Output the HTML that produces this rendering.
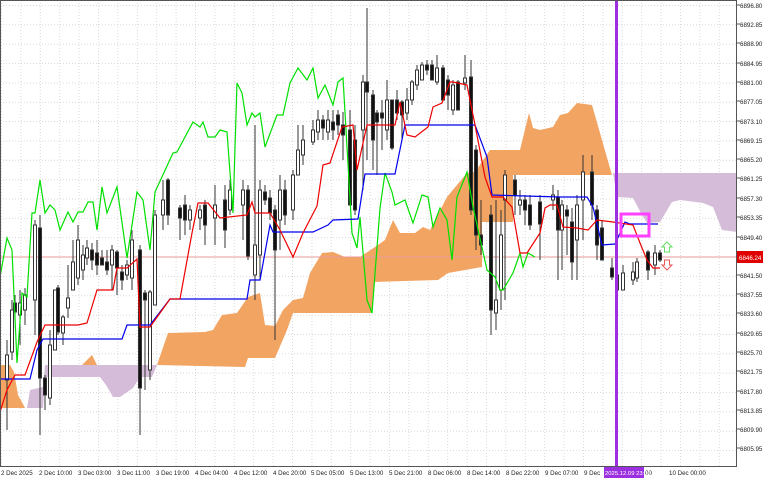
<!DOCTYPE html>
<html><head><meta charset="utf-8"><style>
html,body{margin:0;padding:0;background:#fff;width:768px;height:480px;overflow:hidden}
svg{display:block}
text{font-family:"Liberation Sans",sans-serif;font-size:6.2px;fill:#222}
</style></head><body>
<svg width="768" height="480" viewBox="0 0 768 480" xmlns="http://www.w3.org/2000/svg">
<defs>
<pattern id="gv" width="19.4" height="480" patternUnits="userSpaceOnUse" x="1"><line x1="0.5" y1="0" x2="0.5" y2="480" stroke="#d8d8d8" stroke-width="1" stroke-dasharray="1,2"/></pattern>
<pattern id="gh" width="768" height="19.35" patternUnits="userSpaceOnUse" y="5"><line x1="0" y1="0.5" x2="768" y2="0.5" stroke="#d8d8d8" stroke-width="1" stroke-dasharray="1,2"/></pattern>
</defs>
<rect x="1" y="1" width="735" height="465" fill="url(#gv)"/>
<rect x="1" y="1" width="735" height="465" fill="url(#gh)"/>
<!-- clouds -->
<polygon fill="#f2a462" points="0,365 10,365 14,372 18,395 24,406 25,408 0,408"/>
<polygon fill="#d5bcd8" points="27,408 30,390 43,387 45,365 157,365 152,377 140,377 133,388 120,397 113,397 106,385 100,377 45,377 43,408"/>
<polygon fill="#f2a462" points="82,365 92,355 97,365"/>
<polygon fill="#f2a462" points="157,365 168,333 205,332 213,330 222,315 237,313 248,297 260,293 265,325 275,326 283,310 293,300 303,298 310,273 322,253 333,252 345,257 360,257 375,247 385,240 393,220 400,233 415,233 423,227 430,230 447,197 467,173 475,172 490,150 520,150 529,113 533,128 540,130 553,127 560,115 568,113 577,103 592,105 612,175 513,175 513,222 482,222 482,267 448,273 438,280 375,282 372,313 293,313 287,330 275,358 248,358 245,367"/>
<polygon fill="#d5bcd8" points="613,173 737,173 737,232 722,230 713,207 703,203 680,200 672,202 660,222 647,223 642,215 633,198 617,197"/>
<!-- current price line -->
<line x1="0" y1="257" x2="736" y2="257" stroke="#e89a9a" stroke-width="1"/>
<!-- candles -->
<g stroke="#333" stroke-width="1" shape-rendering="crispEdges">
<g fill="#fff">
<line x1="7" y1="340" x2="7" y2="430"/><rect x="5.5" y="355" width="3" height="25"/>
<line x1="12" y1="300" x2="12" y2="360"/><rect x="10.5" y="310" width="3" height="42"/>
<line x1="20" y1="290" x2="20" y2="345"/><rect x="18.5" y="303" width="3" height="12"/>
<line x1="25" y1="288" x2="25" y2="325"/><rect x="23.5" y="295" width="3" height="15"/>
<line x1="35" y1="220" x2="35" y2="335"/><rect x="33.5" y="225" width="3" height="75"/>
<line x1="50" y1="330" x2="50" y2="405"/><rect x="48.5" y="345" width="3" height="53"/>
<line x1="55" y1="290" x2="55" y2="350"/><rect x="53.5" y="290" width="3" height="60"/>
<line x1="63" y1="315" x2="63" y2="345"/><rect x="61.5" y="317" width="3" height="16"/>
<line x1="68" y1="265" x2="68" y2="318"/><rect x="66.5" y="298" width="3" height="10"/>
<line x1="73" y1="240" x2="73" y2="290"/><rect x="71.5" y="262" width="3" height="28"/>
<line x1="78" y1="225" x2="78" y2="285"/><rect x="76.5" y="240" width="3" height="38"/>
<line x1="83" y1="245" x2="83" y2="280"/><rect x="81.5" y="255" width="3" height="15"/>
<line x1="87" y1="240" x2="87" y2="265"/><rect x="85.5" y="248" width="3" height="10"/>
<line x1="112" y1="245" x2="112" y2="290"/><rect x="110.5" y="250" width="3" height="15"/>
<line x1="127" y1="260" x2="127" y2="280"/><rect x="125.5" y="265" width="3" height="10"/>
<line x1="132" y1="230" x2="132" y2="290"/><rect x="130.5" y="240" width="3" height="38"/>
<line x1="150" y1="290" x2="150" y2="380"/><rect x="148.5" y="292" width="3" height="78"/>
<line x1="155" y1="210" x2="155" y2="305"/><rect x="153.5" y="215" width="3" height="90"/>
<line x1="163" y1="180" x2="163" y2="230"/><rect x="161.5" y="200" width="3" height="15"/>
<line x1="190" y1="205" x2="190" y2="230"/><rect x="188.5" y="210" width="3" height="10"/>
<line x1="200" y1="205" x2="200" y2="230"/><rect x="198.5" y="210" width="3" height="8"/>
<line x1="215" y1="185" x2="215" y2="245"/><rect x="213.5" y="205" width="3" height="13"/>
<line x1="230" y1="180" x2="230" y2="215"/><rect x="228.5" y="190" width="3" height="20"/>
<line x1="243" y1="180" x2="243" y2="240"/><rect x="241.5" y="190" width="3" height="15"/>
<line x1="255" y1="125" x2="255" y2="300"/><rect x="253.5" y="245" width="3" height="30"/>
<line x1="260" y1="180" x2="260" y2="280"/><rect x="258.5" y="190" width="3" height="65"/>
<line x1="280" y1="175" x2="280" y2="250"/><rect x="278.5" y="190" width="3" height="30"/>
<line x1="293" y1="170" x2="293" y2="220"/><rect x="291.5" y="175" width="3" height="35"/>
<line x1="298" y1="125" x2="298" y2="175"/><rect x="296.5" y="150" width="3" height="25"/>
<line x1="303" y1="125" x2="303" y2="165"/><rect x="301.5" y="140" width="3" height="15"/>
<line x1="313" y1="120" x2="313" y2="145"/><rect x="311.5" y="130" width="3" height="12"/>
<line x1="318" y1="110" x2="318" y2="140"/><rect x="316.5" y="120" width="3" height="12"/>
<line x1="328" y1="110" x2="328" y2="140"/><rect x="326.5" y="120" width="3" height="12"/>
<line x1="363" y1="75" x2="363" y2="190"/><rect x="361.5" y="82" width="3" height="48"/>
<line x1="387" y1="80" x2="387" y2="140"/><rect x="385.5" y="100" width="3" height="30"/>
<line x1="407" y1="88" x2="407" y2="120"/><rect x="405.5" y="100" width="3" height="13"/>
<line x1="412" y1="80" x2="412" y2="105"/><rect x="410.5" y="82" width="3" height="18"/>
<line x1="417" y1="65" x2="417" y2="90"/><rect x="415.5" y="70" width="3" height="15"/>
<line x1="422" y1="62" x2="422" y2="80"/><rect x="420.5" y="65" width="3" height="15"/>
<line x1="437" y1="55" x2="437" y2="85"/><rect x="435.5" y="68" width="3" height="14"/>
<line x1="453" y1="80" x2="453" y2="115"/><rect x="451.5" y="85" width="3" height="25"/>
<line x1="465" y1="55" x2="465" y2="90"/><rect x="463.5" y="78" width="3" height="5"/>
<line x1="496" y1="200" x2="496" y2="330"/><rect x="494.5" y="300" width="3" height="13"/>
<line x1="501" y1="210" x2="501" y2="310"/><rect x="499.5" y="235" width="3" height="55"/>
<line x1="505" y1="170" x2="505" y2="300"/><rect x="503.5" y="175" width="3" height="25"/>
<line x1="520" y1="190" x2="520" y2="215"/><rect x="518.5" y="200" width="3" height="5"/>
<line x1="553" y1="185" x2="553" y2="210"/><rect x="551.5" y="195" width="3" height="5"/>
<line x1="562" y1="200" x2="562" y2="270"/><rect x="560.5" y="205" width="3" height="25"/>
<line x1="577" y1="195" x2="577" y2="280"/><rect x="575.5" y="205" width="3" height="35"/>
<line x1="583" y1="155" x2="583" y2="240"/><rect x="581.5" y="172" width="3" height="28"/>
<line x1="623" y1="265" x2="623" y2="288"/><rect x="621.5" y="273" width="3" height="17"/>
<line x1="633" y1="262" x2="633" y2="285"/><rect x="631.5" y="272" width="3" height="8"/>
<line x1="637" y1="258" x2="637" y2="282"/><rect x="635.5" y="262" width="3" height="16"/>
<line x1="655" y1="245" x2="655" y2="275"/><rect x="653.5" y="253" width="3" height="12"/>
</g>
<g fill="#111">
<line x1="15" y1="295" x2="15" y2="320"/><rect x="13.5" y="303" width="3" height="9"/>
<line x1="40" y1="215" x2="40" y2="435"/><rect x="38.5" y="228" width="3" height="150"/>
<line x1="45" y1="375" x2="45" y2="410"/><rect x="43.5" y="378" width="3" height="17"/>
<line x1="58" y1="285" x2="58" y2="335"/><rect x="56.5" y="288" width="3" height="44"/>
<line x1="92" y1="243" x2="92" y2="270"/><rect x="90.5" y="250" width="3" height="10"/>
<line x1="97" y1="240" x2="97" y2="275"/><rect x="95.5" y="253" width="3" height="12"/>
<line x1="102" y1="250" x2="102" y2="265"/><rect x="100.5" y="258" width="3" height="7"/>
<line x1="107" y1="250" x2="107" y2="275"/><rect x="105.5" y="262" width="3" height="8"/>
<line x1="117" y1="250" x2="117" y2="295"/><rect x="115.5" y="252" width="3" height="16"/>
<line x1="122" y1="265" x2="122" y2="290"/><rect x="120.5" y="272" width="3" height="8"/>
<line x1="140" y1="245" x2="140" y2="435"/><rect x="138.5" y="250" width="3" height="138"/>
<line x1="145" y1="290" x2="145" y2="390"/><rect x="143.5" y="293" width="3" height="7"/>
<line x1="168" y1="178" x2="168" y2="225"/><rect x="166.5" y="180" width="3" height="35"/>
<line x1="180" y1="205" x2="180" y2="240"/><rect x="178.5" y="208" width="3" height="10"/>
<line x1="185" y1="195" x2="185" y2="235"/><rect x="183.5" y="205" width="3" height="15"/>
<line x1="205" y1="200" x2="205" y2="245"/><rect x="203.5" y="205" width="3" height="20"/>
<line x1="225" y1="185" x2="225" y2="248"/><rect x="223.5" y="200" width="3" height="30"/>
<line x1="248" y1="185" x2="248" y2="260"/><rect x="246.5" y="190" width="3" height="66"/>
<line x1="265" y1="185" x2="265" y2="205"/><rect x="263.5" y="192" width="3" height="8"/>
<line x1="270" y1="190" x2="270" y2="220"/><rect x="268.5" y="198" width="3" height="15"/>
<line x1="275" y1="205" x2="275" y2="340"/><rect x="273.5" y="210" width="3" height="40"/>
<line x1="285" y1="180" x2="285" y2="225"/><rect x="283.5" y="190" width="3" height="25"/>
<line x1="323" y1="115" x2="323" y2="140"/><rect x="321.5" y="120" width="3" height="8"/>
<line x1="333" y1="110" x2="333" y2="140"/><rect x="331.5" y="122" width="3" height="8"/>
<line x1="338" y1="110" x2="338" y2="135"/><rect x="336.5" y="115" width="3" height="10"/>
<line x1="343" y1="112" x2="343" y2="160"/><rect x="341.5" y="125" width="3" height="10"/>
<line x1="350" y1="110" x2="350" y2="205"/><rect x="348.5" y="130" width="3" height="75"/>
<line x1="355" y1="125" x2="355" y2="215"/><rect x="353.5" y="140" width="3" height="70"/>
<line x1="367" y1="8" x2="367" y2="160"/><rect x="365.5" y="82" width="3" height="10"/>
<line x1="373" y1="90" x2="373" y2="170"/><rect x="371.5" y="95" width="3" height="45"/>
<line x1="377" y1="110" x2="377" y2="175"/><rect x="375.5" y="113" width="3" height="9"/>
<line x1="382" y1="100" x2="382" y2="150"/><rect x="380.5" y="113" width="3" height="5"/>
<line x1="392" y1="100" x2="392" y2="150"/><rect x="390.5" y="100" width="3" height="48"/>
<line x1="397" y1="90" x2="397" y2="120"/><rect x="395.5" y="100" width="3" height="13"/>
<line x1="402" y1="100" x2="402" y2="140"/><rect x="400.5" y="102" width="3" height="13"/>
<line x1="427" y1="60" x2="427" y2="75"/><rect x="425.5" y="65" width="3" height="5"/>
<line x1="432" y1="60" x2="432" y2="80"/><rect x="430.5" y="65" width="3" height="15"/>
<line x1="443" y1="65" x2="443" y2="100"/><rect x="441.5" y="68" width="3" height="32"/>
<line x1="448" y1="75" x2="448" y2="110"/><rect x="446.5" y="80" width="3" height="15"/>
<line x1="458" y1="80" x2="458" y2="110"/><rect x="456.5" y="82" width="3" height="28"/>
<line x1="471" y1="60" x2="471" y2="215"/><rect x="469.5" y="77" width="3" height="133"/>
<line x1="476" y1="145" x2="476" y2="250"/><rect x="474.5" y="150" width="3" height="85"/>
<line x1="481" y1="200" x2="481" y2="255"/><rect x="479.5" y="235" width="3" height="10"/>
<line x1="491" y1="205" x2="491" y2="335"/><rect x="489.5" y="215" width="3" height="95"/>
<line x1="515" y1="175" x2="515" y2="215"/><rect x="513.5" y="180" width="3" height="15"/>
<line x1="525" y1="195" x2="525" y2="225"/><rect x="523.5" y="200" width="3" height="10"/>
<line x1="530" y1="195" x2="530" y2="230"/><rect x="528.5" y="205" width="3" height="20"/>
<line x1="540" y1="195" x2="540" y2="260"/><rect x="538.5" y="202" width="3" height="22"/>
<line x1="558" y1="190" x2="558" y2="280"/><rect x="556.5" y="197" width="3" height="33"/>
<line x1="567" y1="205" x2="567" y2="255"/><rect x="565.5" y="210" width="3" height="6"/>
<line x1="572" y1="208" x2="572" y2="280"/><rect x="570.5" y="222" width="3" height="40"/>
<line x1="592" y1="155" x2="592" y2="220"/><rect x="590.5" y="172" width="3" height="33"/>
<line x1="597" y1="205" x2="597" y2="260"/><rect x="595.5" y="210" width="3" height="35"/>
<line x1="602" y1="220" x2="602" y2="260"/><rect x="600.5" y="228" width="3" height="32"/>
<line x1="612" y1="258" x2="612" y2="280"/><rect x="610.5" y="268" width="3" height="9"/>
<line x1="617" y1="255" x2="617" y2="290"/><rect x="615.5" y="275" width="3" height="15"/>
<line x1="648" y1="250" x2="648" y2="280"/><rect x="646.5" y="252" width="3" height="18"/>
<line x1="660" y1="250" x2="660" y2="262"/><rect x="658.5" y="253" width="3" height="7"/>
</g>
</g>
<!-- ichimoku lines -->
<polyline fill="none" stroke="#00e000" stroke-width="1.2" points="0,277 7,238 12,250 17,363 22,293 27,297 32,213 35,213 40,180 45,213 50,205 55,210 60,230 68,212 73,222 78,212 83,212 88,202 93,202 97,230 102,187 107,213 117,187 127,258 137,192 143,200 150,250 155,192 173,153 177,152 193,122 200,127 203,122 208,137 215,137 220,130 227,132 233,213 237,83 242,93 247,125 252,113 255,117 260,113 265,147 277,115 283,115 290,83 298,68 307,80 313,68 318,98 325,85 333,105 338,82 343,78 352,233 357,248 360,217 367,300 372,313 380,208 385,173 392,192 395,205 405,200 413,223 422,195 428,197 433,227 440,208 447,220 452,260 457,197 467,172 473,207 487,270 495,277 500,290 503,290 513,273 520,253 523,267 528,253 535,257"/>
<polyline fill="none" stroke="#0000ee" stroke-width="1.2" points="0,379 30,379 37,350 43,339 122,339 127,325 150,325 170,299 247,299 250,280 260,280 270,225 273,232 313,232 328,225 333,220 358,219 365,174 395,174 405,125 475,125 487,157 492,195 560,197 587,197 593,207 602,245 615,244 625,222 630,224 658,224"/>
<polyline fill="none" stroke="#ee0000" stroke-width="1.2" points="0,412 7,390 15,375 25,375 37,342 45,325 78,325 87,323 97,290 113,290 117,268 127,268 137,259 140,327 150,327 170,299 180,299 192,233 198,203 208,203 220,218 247,215 252,202 255,213 270,213 280,230 293,257 303,233 317,206 323,165 330,163 342,127 353,125 357,170 367,125 395,125 400,102 407,135 415,137 428,127 433,107 442,103 450,82 453,82 467,85 475,125 485,177 492,197 503,197 512,207 520,253 527,253 540,233 545,208 550,205 557,205 563,227 577,228 588,230 597,220 613,222 633,225 640,243 647,260 653,268 660,268"/>
<!-- vertical line -->
<rect x="615" y="0" width="3" height="466" fill="#9b30e0"/>
<!-- magenta box -->
<rect x="621" y="214" width="28" height="22" fill="none" stroke="#ff40ff" stroke-width="3"/>
<!-- arrows -->
<path d="M667,242 L672,247 L669.5,247 L669.5,252 L664.5,252 L664.5,247 L662,247 Z" fill="#fff" stroke="#66dd66" stroke-width="1"/>
<path d="M667,270 L672,265 L669.5,265 L669.5,260 L664.5,260 L664.5,265 L662,265 Z" fill="#fff" stroke="#ee5555" stroke-width="1"/>
<!-- frame -->
<rect x="0.5" y="0.5" width="736" height="466" fill="none" stroke="#555" stroke-width="1"/>
<!-- price axis -->
<g stroke="#555" stroke-width="1">
<line x1="737" y1="5" x2="740" y2="5"/><line x1="737" y1="24" x2="740" y2="24"/><line x1="737" y1="43" x2="740" y2="43"/><line x1="737" y1="63" x2="740" y2="63"/><line x1="737" y1="82" x2="740" y2="82"/><line x1="737" y1="101" x2="740" y2="101"/><line x1="737" y1="121" x2="740" y2="121"/><line x1="737" y1="140" x2="740" y2="140"/><line x1="737" y1="159" x2="740" y2="159"/><line x1="737" y1="178" x2="740" y2="178"/><line x1="737" y1="198" x2="740" y2="198"/><line x1="737" y1="217" x2="740" y2="217"/><line x1="737" y1="237" x2="740" y2="237"/><line x1="737" y1="275" x2="740" y2="275"/><line x1="737" y1="294" x2="740" y2="294"/><line x1="737" y1="313" x2="740" y2="313"/><line x1="737" y1="333" x2="740" y2="333"/><line x1="737" y1="352" x2="740" y2="352"/><line x1="737" y1="371" x2="740" y2="371"/><line x1="737" y1="391" x2="740" y2="391"/><line x1="737" y1="410" x2="740" y2="410"/><line x1="737" y1="429" x2="740" y2="429"/><line x1="737" y1="448" x2="740" y2="448"/>
</g>
<g>
<text x="740" y="8">6896.80</text><text x="740" y="27">6892.85</text><text x="740" y="46">6888.90</text><text x="740" y="66">6884.95</text><text x="740" y="85">6881.00</text><text x="740" y="104">6877.05</text><text x="740" y="124">6873.10</text><text x="740" y="143">6869.15</text><text x="740" y="162">6865.20</text><text x="740" y="181">6861.25</text><text x="740" y="201">6857.30</text><text x="740" y="220">6853.35</text><text x="740" y="240">6849.40</text><text x="740" y="278">6841.50</text><text x="740" y="297">6837.55</text><text x="740" y="316">6833.60</text><text x="740" y="336">6829.65</text><text x="740" y="355">6825.70</text><text x="740" y="374">6821.75</text><text x="740" y="394">6817.80</text><text x="740" y="413">6813.85</text><text x="740" y="432">6809.90</text><text x="740" y="451">6805.95</text>
</g>
<rect x="737" y="251" width="26" height="12" fill="#e00000"/>
<text x="739" y="260" style="fill:#fff">6846.24</text>
<!-- time axis -->
<g style="font-size:5.9px">
<text x="1" y="475">2 Dec 2025</text><text x="39" y="475">2 Dec 10:00</text><text x="78" y="475">3 Dec 03:00</text><text x="117" y="475">3 Dec 11:00</text><text x="156" y="475">3 Dec 19:00</text><text x="195" y="475">4 Dec 04:00</text><text x="234" y="475">4 Dec 12:00</text><text x="273" y="475">4 Dec 20:00</text><text x="311" y="475">5 Dec 05:00</text><text x="350" y="475">5 Dec 13:00</text><text x="389" y="475">5 Dec 21:00</text><text x="428" y="475">8 Dec 06:00</text><text x="467" y="475">8 Dec 14:00</text><text x="506" y="475">8 Dec 22:00</text><text x="545" y="475">9 Dec 07:00</text><text x="584" y="475">9 Dec</text><text x="645" y="475">00</text><text x="669" y="475">10 Dec 00:00</text>
</g>
<rect x="604" y="467" width="40" height="11" fill="#9b30e0"/>
<text x="605" y="475" style="fill:#fff;font-size:5.9px">2025.12.09 23:00</text>
</svg>
</body></html>
